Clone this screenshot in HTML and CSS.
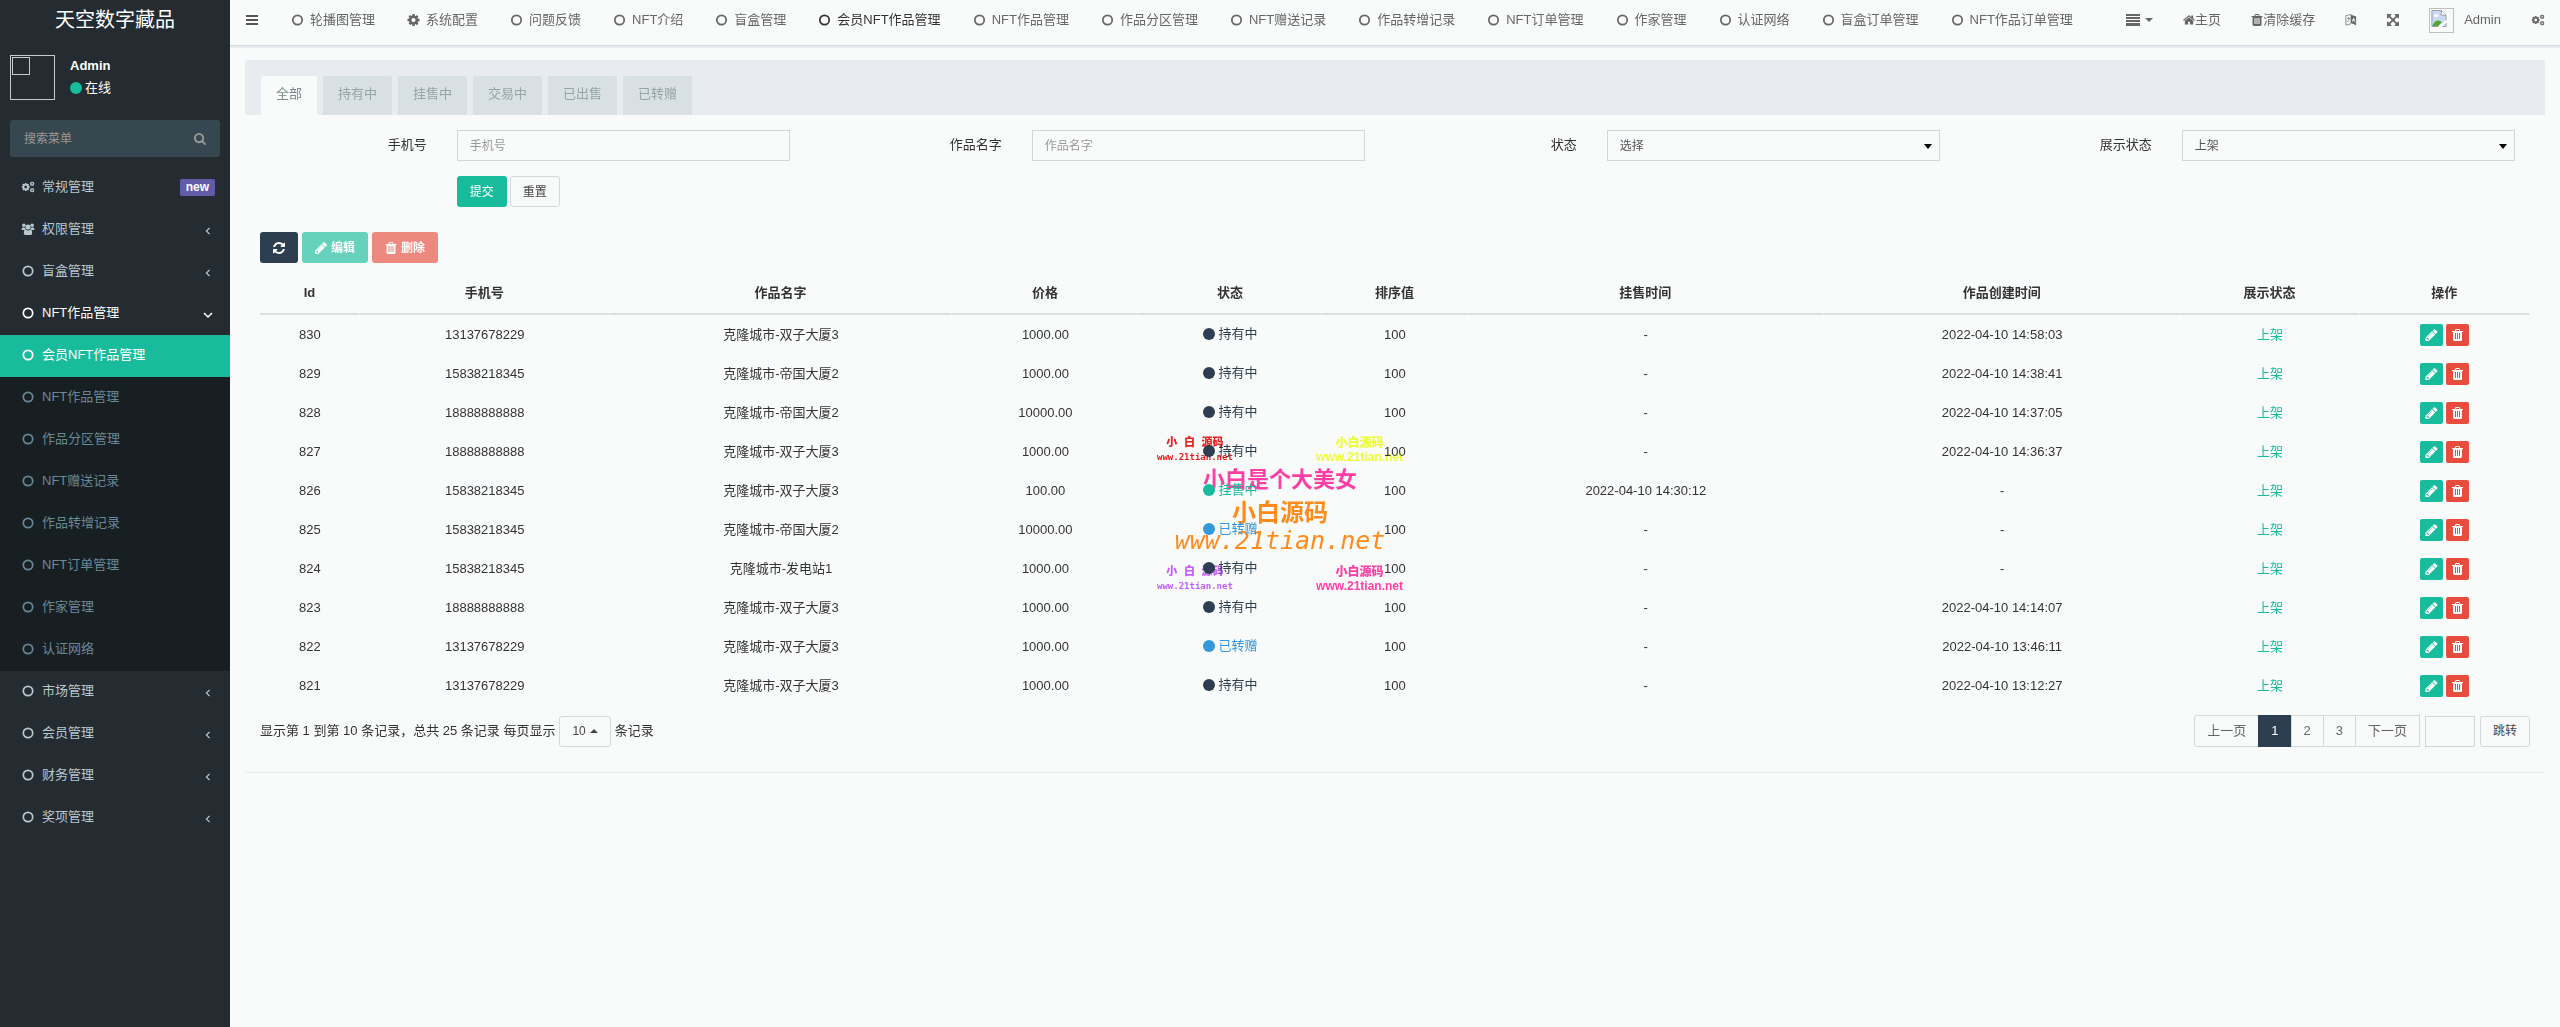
FILE: index.html
```html
<!DOCTYPE html>
<html lang="zh-CN">
<head>
  <meta charset="UTF-8">
  <meta name="viewport" content="width=device-width, initial-scale=1.0">
  <title>会员NFT作品管理</title>
  <link rel="stylesheet" href="styles.css">
</head>
<body>
  <!-- icon sprite -->
  <svg class="sprite" aria-hidden="true">
    <symbol id="i-circle" viewBox="0 0 12 12"><circle cx="6" cy="6" r="4.7" fill="none" stroke="currentColor" stroke-width="1.7"/></symbol>
    <symbol id="i-dot" viewBox="0 0 12 12"><circle cx="6" cy="6" r="6"/></symbol>
    <symbol id="i-cog" viewBox="128 128 1536 1536"><path d="M1152 896q0-106-75-181t-181-75-181 75-75 181 75 181 181 75 181-75 75-181zm512-109v222q0 12-8 23t-20 13l-185 28q-19 54-39 91 35 50 107 138 10 12 10 25t-9 23q-27 37-99 108t-94 71q-12 0-26-9l-138-108q-44 23-91 38-16 136-29 186-7 28-36 28h-222q-14 0-24.500-8.500t-11.500-21.500l-28-184q-49-16-90-37l-141 107q-10 9-25 9-14 0-25-11-126-114-165-168-7-10-7-23 0-12 8-23 15-21 51-66.500t54-70.500q-27-50-41-99l-183-27q-13-2-21-12.500t-8-23.500v-222q0-12 8-23t19-13l186-28q14-46 39-92-40-57-107-138-10-12-10-24 0-10 9-23 26-36 98.500-107.500t94.500-71.500q13 0 26 10l138 107q44-23 91-38 16-136 29-186 7-28 36-28h222q14 0 24.500 8.500t11.500 21.500l28 184q49 16 90 37l142-107q9-9 24-9 13 0 25 10 129 119 165 170 7 8 7 22 0 12-8 23-15 21-51 66.500t-54 70.500q26 50 41 98l183 28q13 2 21 12.500t8 23.500z"/></symbol>
    <symbol id="i-cogs" viewBox="0 0 28 26">
      <use href="#i-cog" x="0" y="4" width="18" height="18"/>
      <use href="#i-cog" x="18" y="1" width="10" height="10"/>
      <use href="#i-cog" x="18" y="15" width="10" height="10"/>
    </symbol>
    <symbol id="i-group" viewBox="0 0 28 26">
      <circle cx="5" cy="5" r="3.800"/><circle cx="23" cy="5" r="3.800"/><circle cx="14" cy="8.500" r="5.500"/>
      <path d="M0 15q0-6 3-6 4 2 5 1 0 4 2 5H2q-2 0-2 0zM28 15q0-6-3-6-4 2-5 1 0 4-2 5h8q2 0 2 0zM5 22q0-8 4-8 5 4 10 0 4 0 4 8 0 4-4 4H9q-4 0-4-4z"/>
    </symbol>
    <symbol id="i-home" viewBox="64 192 1664 1408"><path d="M1472 992v480q0 26-19 45t-45 19h-384v-384h-256v384h-384q-26 0-45-19t-19-45v-480q0-1 .5-3t.5-3l575-474 575 474q1 2 1 6zm223-69l-62 74q-8 9-21 11h-3q-13 0-21-7l-692-577-692 577q-12 8-24 7-13-2-21-11l-62-74q-8-10-7-23.500t11-21.500l719-599q32-26 76-26t76 26l244 204v-195q0-14 9-23t23-9h192q14 0 23 9t9 23v408l219 182q10 8 11 21.500t-7 23.500z"/></symbol>
    <symbol id="i-trash" viewBox="128 128 1536 1536"><path d="M704 1376v-704q0-14-9-23t-23-9h-64q-14 0-23 9t-9 23v704q0 14 9 23t23 9h64q14 0 23-9t9-23zm256 0v-704q0-14-9-23t-23-9h-64q-14 0-23 9t-9 23v704q0 14 9 23t23 9h64q14 0 23-9t9-23zm256 0v-704q0-14-9-23t-23-9h-64q-14 0-23 9t-9 23v704q0 14 9 23t23 9h64q14 0 23-9t9-23zm-544-992h448l-48-117q-7-9-17-11h-317q-10 2-17 11zm928 32v64q0 14-9 23t-23 9h-96v948q0 83-47 143.500t-113 60.500h-832q-66 0-113-58.500t-47-141.500v-952h-96q-14 0-23-9t-9-23v-64q0-14 9-23t23-9h309l70-167q15-37 54-63t79-26h320q40 0 79 26t54 63l70 167h309q14 0 23 9t9 23z"/></symbol>
    <symbol id="i-pencil" viewBox="128 128 1536 1536"><path d="M491 1536l91-91-235-235-91 91v107h128v128h107zm523-928q0-22-22-22-10 0-17 7l-542 542q-7 7-7 17 0 22 22 22 10 0 17-7l542-542q7-7 7-17zm-54-192l416 416-832 832h-416v-416zm683 96q0 53-37 90l-166 166-416-416 166-165q36-38 90-38 53 0 91 38l235 234q37 39 37 91z"/></symbol>
    <symbol id="i-refresh" viewBox="128 128 1536 1536"><path d="M1639 1056q0 5-1 7-64 268-268 434.500t-478 166.500q-146 0-282.500-55t-243.500-157l-129 129q-19 19-45 19t-45-19-19-45v-448q0-26 19-45t45-19h448q26 0 45 19t19 45-19 45l-137 137q71 66 161 102t187 36q134 0 250-65t186-179q11-17 53-117 8-23 30-23h192q13 0 22.500 9.500t9.500 22.500zm25-800v448q0 26-19 45t-45 19h-448q-26 0-45-19t-19-45 19-45l138-138q-148-137-349-137-134 0-250 65t-186 179q-11 17-53 117-8 23-30 23h-199q-13 0-22.500-9.500t-9.500-22.500v-7q65-268 270-434.500t480-166.500q146 0 284 55.500t245 156.500l130-129q19-19 45-19t45 19 19 45z"/></symbol>
    <symbol id="i-search" viewBox="64 128 1664 1664"><path d="M1216 832q0-185-131.500-316.500t-316.500-131.500-316.500 131.500-131.500 316.500 131.500 316.500 316.500 131.500 316.500-131.500 131.500-316.500zm512 832q0 52-38 90t-90 38q-54 0-90-38l-343-342q-179 124-399 124-143 0-273.500-55.500t-225-150-150-225-55.500-273.500 55.500-273.500 150-225 225-150 273.500-55.500 273.500 55.500 225 150 150 225 55.500 273.500q0 220-124 399l343 343q37 37 37 90z"/></symbol>
    <symbol id="i-expand" viewBox="128 128 1536 1536"><path d="M1411 541l-355 355 355 355 144-144q29-31 70-14 39 17 39 59v448q0 26-19 45t-45 19h-448q-42 0-59-40-17-39 14-69l144-144-355-355-355 355 144 144q31 30 14 69-17 40-59 40h-448q-26 0-45-19t-19-45v-448q0-42 40-59 39-17 69 14l144 144 355-355-355-355-144 144q-19 19-45 19-12 0-24-5-40-17-40-59v-448q0-26 19-45t45-19h448q42 0 59 40 17 39-14 69l-144 144 355 355 355-355-144-144q-31-30-14-69 17-40 59-40h448q26 0 45 19t19 45v448q0 42-39 59-13 5-25 5-26 0-45-19z"/></symbol>
    <symbol id="i-bars" viewBox="0 0 12 12"><path d="M0 1h12v2H0zM0 5h12v2H0zM0 9h12v2H0z"/></symbol>
    <symbol id="i-list" viewBox="0 0 14 12"><path d="M0 0h14v2H0zM0 3h14v2H0zM0 6h14v2H0zM0 9h14v3H0z"/></symbol>
    <symbol id="i-language" viewBox="0 0 14 14">
      <path d="M1 2l6-1.500v11L1 13z" fill="none" stroke="currentColor" stroke-width=".8"/>
      <path d="M2.500 5h3M4 3.500v2M2.500 9q2.500-1 2.500-4" fill="none" stroke="currentColor" stroke-width=".8"/>
      <path fill-rule="evenodd" d="M7 1l6 2v10l-6-2.500zM9 9l.5-1.500 1.500.5.500 1.700 1 .3L10.700 5l-1-.3L8 8.700z"/>
    </symbol>
    <symbol id="i-left" viewBox="0 0 6 10"><path d="M5 1L1 5l4 4" fill="none" stroke="currentColor" stroke-width="1.500"/></symbol>
    <symbol id="i-down" viewBox="0 0 10 6"><path d="M1 1l4 4 4-4" fill="none" stroke="currentColor" stroke-width="1.500"/></symbol>
    <symbol id="i-broken" viewBox="0 0 16 18">
      <path d="M.5.500h10l5 5v12H.5z" fill="#c9d8f5" stroke="#9a9a9a"/>
      <path d="M10.500.500v5h5" fill="#fff" stroke="#9a9a9a"/>
      <ellipse cx="5" cy="6" rx="2.500" ry="1.500" fill="#fff"/>
      <path d="M1 17q2-6 6-6 3 0 4 2l-4 4z" fill="#4fa82e"/>
      <path d="M7 18l9-8v3l-5 5z" fill="#fff"/>
    </symbol>
  </svg>

  <aside class="sidebar">
    <a href="#" class="logo">天空数字藏品</a>
    <div class="user-panel">
      <div class="avatar"></div>
      <div class="info">
        <strong>Admin</strong>
        <a href="#"><svg class="icon online"><use href="#i-dot"/></svg>在线</a>
      </div>
    </div>
    <form class="menu-search">
      <input type="text" placeholder="搜索菜单" aria-label="搜索菜单">
      <button type="button" aria-label="搜索"><svg class="icon"><use href="#i-search"/></svg></button>
    </form>
    <ul class="menu">
      <li><a href="#"><svg class="icon wide"><use href="#i-cogs"/></svg>常规管理<span class="badge">new</span></a></li>
      <li><a href="#"><svg class="icon wide"><use href="#i-group"/></svg>权限管理<svg class="angle"><use href="#i-left"/></svg></a></li>
      <li><a href="#"><svg class="icon wide"><use href="#i-circle"/></svg>盲盒管理<svg class="angle"><use href="#i-left"/></svg></a></li>
      <li class="open"><a href="#"><svg class="icon wide"><use href="#i-circle"/></svg>NFT作品管理<svg class="angle"><use href="#i-down"/></svg></a>
        <ul class="submenu">
          <li class="active"><a href="#"><svg class="icon wide"><use href="#i-circle"/></svg>会员NFT作品管理</a></li>
          <li><a href="#"><svg class="icon wide"><use href="#i-circle"/></svg>NFT作品管理</a></li>
          <li><a href="#"><svg class="icon wide"><use href="#i-circle"/></svg>作品分区管理</a></li>
          <li><a href="#"><svg class="icon wide"><use href="#i-circle"/></svg>NFT赠送记录</a></li>
          <li><a href="#"><svg class="icon wide"><use href="#i-circle"/></svg>作品转增记录</a></li>
          <li><a href="#"><svg class="icon wide"><use href="#i-circle"/></svg>NFT订单管理</a></li>
          <li><a href="#"><svg class="icon wide"><use href="#i-circle"/></svg>作家管理</a></li>
          <li><a href="#"><svg class="icon wide"><use href="#i-circle"/></svg>认证网络</a></li>
        </ul>
      </li>
      <li><a href="#"><svg class="icon wide"><use href="#i-circle"/></svg>市场管理<svg class="angle"><use href="#i-left"/></svg></a></li>
      <li><a href="#"><svg class="icon wide"><use href="#i-circle"/></svg>会员管理<svg class="angle"><use href="#i-left"/></svg></a></li>
      <li><a href="#"><svg class="icon wide"><use href="#i-circle"/></svg>财务管理<svg class="angle"><use href="#i-left"/></svg></a></li>
      <li><a href="#"><svg class="icon wide"><use href="#i-circle"/></svg>奖项管理<svg class="angle"><use href="#i-left"/></svg></a></li>
    </ul>
  </aside>

  <div class="wrapper">
    <header class="header">
      <button type="button" class="toggle" aria-label="菜单"><svg class="icon"><use href="#i-bars"/></svg></button>
      <nav class="nav-tabs">
        <a href="#"><svg class="icon"><use href="#i-circle"/></svg>轮播图管理</a>
        <a href="#"><svg class="icon"><use href="#i-cog"/></svg>系统配置</a>
        <a href="#"><svg class="icon"><use href="#i-circle"/></svg>问题反馈</a>
        <a href="#"><svg class="icon"><use href="#i-circle"/></svg>NFT介绍</a>
        <a href="#"><svg class="icon"><use href="#i-circle"/></svg>盲盒管理</a>
        <a href="#" class="active"><svg class="icon"><use href="#i-circle"/></svg>会员NFT作品管理</a>
        <a href="#"><svg class="icon"><use href="#i-circle"/></svg>NFT作品管理</a>
        <a href="#"><svg class="icon"><use href="#i-circle"/></svg>作品分区管理</a>
        <a href="#"><svg class="icon"><use href="#i-circle"/></svg>NFT赠送记录</a>
        <a href="#"><svg class="icon"><use href="#i-circle"/></svg>作品转增记录</a>
        <a href="#"><svg class="icon"><use href="#i-circle"/></svg>NFT订单管理</a>
        <a href="#"><svg class="icon"><use href="#i-circle"/></svg>作家管理</a>
        <a href="#"><svg class="icon"><use href="#i-circle"/></svg>认证网络</a>
        <a href="#"><svg class="icon"><use href="#i-circle"/></svg>盲盒订单管理</a>
        <a href="#"><svg class="icon"><use href="#i-circle"/></svg>NFT作品订单管理</a>
      </nav>
      <nav class="nav-right">
        <a href="#" aria-label="更多"><svg class="icon list"><use href="#i-list"/></svg><span class="caret"></span></a>
        <a href="#"><svg class="icon"><use href="#i-home"/></svg>主页</a>
        <a href="#"><svg class="icon"><use href="#i-trash"/></svg>清除缓存</a>
        <a href="#" aria-label="语言"><svg class="icon"><use href="#i-language"/></svg></a>
        <a href="#" aria-label="全屏"><svg class="icon"><use href="#i-expand"/></svg></a>
        <a href="#" class="account"><span class="thumb"><svg><use href="#i-broken"/></svg></span>Admin</a>
        <a href="#" aria-label="设置"><svg class="icon cogs"><use href="#i-cogs"/></svg></a>
      </nav>
    </header>

    <main class="content">
      <section class="panel">
        <div class="panel-heading">
          <a href="#" class="active">全部</a>
          <a href="#">持有中</a>
          <a href="#">挂售中</a>
          <a href="#">交易中</a>
          <a href="#">已出售</a>
          <a href="#">已转赠</a>
        </div>

        <form class="search-form">
          <div class="field">
            <label for="mobile">手机号</label>
            <div class="control"><input type="text" id="mobile" placeholder="手机号"></div>
          </div>
          <div class="field">
            <label for="name">作品名字</label>
            <div class="control"><input type="text" id="name" placeholder="作品名字"></div>
          </div>
          <div class="field">
            <label for="status">状态</label>
            <div class="control select"><select id="status"><option>选择</option><option>持有中</option><option>挂售中</option></select></div>
          </div>
          <div class="field">
            <label for="show">展示状态</label>
            <div class="control select"><select id="show"><option>上架</option><option>下架</option></select></div>
          </div>
          <div class="field">
            <div class="control actions">
              <button type="button" class="btn btn-success">提交</button>
              <button type="reset" class="btn btn-default">重置</button>
            </div>
          </div>
        </form>

        <div class="table-box">
          <div class="toolbar">
            <button type="button" class="btn btn-primary" aria-label="刷新"><svg class="icon"><use href="#i-refresh"/></svg></button>
            <button type="button" class="btn btn-success" disabled><svg class="icon"><use href="#i-pencil"/></svg>编辑</button>
            <button type="button" class="btn btn-danger" disabled><svg class="icon"><use href="#i-trash"/></svg>删除</button>
          </div>

          <table class="table">
            <colgroup>
              <col class="c-id"><col class="c-mobile"><col class="c-name"><col class="c-price"><col class="c-status">
              <col class="c-sort"><col class="c-time"><col class="c-time"><col class="c-show"><col class="c-ops">
            </colgroup>
            <thead>
              <tr><th>Id</th><th>手机号</th><th>作品名字</th><th>价格</th><th>状态</th><th>排序值</th><th>挂售时间</th><th>作品创建时间</th><th>展示状态</th><th>操作</th></tr>
            </thead>
            <tbody>
              <tr>
                <td>830</td><td>13137678229</td><td>克隆城市-双子大厦3</td><td>1000.00</td>
                <td><span class="status"><svg class="icon"><use href="#i-dot"/></svg>持有中</span></td>
                <td>100</td><td>-</td><td>2022-04-10 14:58:03</td><td><a href="#">上架</a></td>
                <td><button type="button" class="btn-xs edit" aria-label="编辑"><svg class="icon"><use href="#i-pencil"/></svg></button><button type="button" class="btn-xs del" aria-label="删除"><svg class="icon"><use href="#i-trash"/></svg></button></td>
              </tr>
              <tr>
                <td>829</td><td>15838218345</td><td>克隆城市-帝国大厦2</td><td>1000.00</td>
                <td><span class="status"><svg class="icon"><use href="#i-dot"/></svg>持有中</span></td>
                <td>100</td><td>-</td><td>2022-04-10 14:38:41</td><td><a href="#">上架</a></td>
                <td><button type="button" class="btn-xs edit" aria-label="编辑"><svg class="icon"><use href="#i-pencil"/></svg></button><button type="button" class="btn-xs del" aria-label="删除"><svg class="icon"><use href="#i-trash"/></svg></button></td>
              </tr>
              <tr>
                <td>828</td><td>18888888888</td><td>克隆城市-帝国大厦2</td><td>10000.00</td>
                <td><span class="status"><svg class="icon"><use href="#i-dot"/></svg>持有中</span></td>
                <td>100</td><td>-</td><td>2022-04-10 14:37:05</td><td><a href="#">上架</a></td>
                <td><button type="button" class="btn-xs edit" aria-label="编辑"><svg class="icon"><use href="#i-pencil"/></svg></button><button type="button" class="btn-xs del" aria-label="删除"><svg class="icon"><use href="#i-trash"/></svg></button></td>
              </tr>
              <tr>
                <td>827</td><td>18888888888</td><td>克隆城市-双子大厦3</td><td>1000.00</td>
                <td><span class="status"><svg class="icon"><use href="#i-dot"/></svg>持有中</span></td>
                <td>100</td><td>-</td><td>2022-04-10 14:36:37</td><td><a href="#">上架</a></td>
                <td><button type="button" class="btn-xs edit" aria-label="编辑"><svg class="icon"><use href="#i-pencil"/></svg></button><button type="button" class="btn-xs del" aria-label="删除"><svg class="icon"><use href="#i-trash"/></svg></button></td>
              </tr>
              <tr>
                <td>826</td><td>15838218345</td><td>克隆城市-双子大厦3</td><td>100.00</td>
                <td><span class="status selling"><svg class="icon"><use href="#i-dot"/></svg>挂售中</span></td>
                <td>100</td><td>2022-04-10 14:30:12</td><td>-</td><td><a href="#">上架</a></td>
                <td><button type="button" class="btn-xs edit" aria-label="编辑"><svg class="icon"><use href="#i-pencil"/></svg></button><button type="button" class="btn-xs del" aria-label="删除"><svg class="icon"><use href="#i-trash"/></svg></button></td>
              </tr>
              <tr>
                <td>825</td><td>15838218345</td><td>克隆城市-帝国大厦2</td><td>10000.00</td>
                <td><span class="status given"><svg class="icon"><use href="#i-dot"/></svg>已转赠</span></td>
                <td>100</td><td>-</td><td>-</td><td><a href="#">上架</a></td>
                <td><button type="button" class="btn-xs edit" aria-label="编辑"><svg class="icon"><use href="#i-pencil"/></svg></button><button type="button" class="btn-xs del" aria-label="删除"><svg class="icon"><use href="#i-trash"/></svg></button></td>
              </tr>
              <tr>
                <td>824</td><td>15838218345</td><td>克隆城市-发电站1</td><td>1000.00</td>
                <td><span class="status"><svg class="icon"><use href="#i-dot"/></svg>持有中</span></td>
                <td>100</td><td>-</td><td>-</td><td><a href="#">上架</a></td>
                <td><button type="button" class="btn-xs edit" aria-label="编辑"><svg class="icon"><use href="#i-pencil"/></svg></button><button type="button" class="btn-xs del" aria-label="删除"><svg class="icon"><use href="#i-trash"/></svg></button></td>
              </tr>
              <tr>
                <td>823</td><td>18888888888</td><td>克隆城市-双子大厦3</td><td>1000.00</td>
                <td><span class="status"><svg class="icon"><use href="#i-dot"/></svg>持有中</span></td>
                <td>100</td><td>-</td><td>2022-04-10 14:14:07</td><td><a href="#">上架</a></td>
                <td><button type="button" class="btn-xs edit" aria-label="编辑"><svg class="icon"><use href="#i-pencil"/></svg></button><button type="button" class="btn-xs del" aria-label="删除"><svg class="icon"><use href="#i-trash"/></svg></button></td>
              </tr>
              <tr>
                <td>822</td><td>13137678229</td><td>克隆城市-双子大厦3</td><td>1000.00</td>
                <td><span class="status given"><svg class="icon"><use href="#i-dot"/></svg>已转赠</span></td>
                <td>100</td><td>-</td><td>2022-04-10 13:46:11</td><td><a href="#">上架</a></td>
                <td><button type="button" class="btn-xs edit" aria-label="编辑"><svg class="icon"><use href="#i-pencil"/></svg></button><button type="button" class="btn-xs del" aria-label="删除"><svg class="icon"><use href="#i-trash"/></svg></button></td>
              </tr>
              <tr>
                <td>821</td><td>13137678229</td><td>克隆城市-双子大厦3</td><td>1000.00</td>
                <td><span class="status"><svg class="icon"><use href="#i-dot"/></svg>持有中</span></td>
                <td>100</td><td>-</td><td>2022-04-10 13:12:27</td><td><a href="#">上架</a></td>
                <td><button type="button" class="btn-xs edit" aria-label="编辑"><svg class="icon"><use href="#i-pencil"/></svg></button><button type="button" class="btn-xs del" aria-label="删除"><svg class="icon"><use href="#i-trash"/></svg></button></td>
              </tr>
            </tbody>
          </table>

          <div class="table-footer">
            <div class="page-info">
              <span>显示第 1 到第 10 条记录，总共 25 条记录 每页显示</span>
              <button type="button" class="btn btn-default page-size">10<span class="caret up"></span></button>
              <span>条记录</span>
            </div>
            <div class="pager">
              <ul class="pagination">
                <li><a href="#">上一页</a></li>
                <li class="active"><a href="#">1</a></li>
                <li><a href="#">2</a></li>
                <li><a href="#">3</a></li>
                <li><a href="#">下一页</a></li>
              </ul>
              <input type="text" class="jump" aria-label="页码">
              <button type="button" class="btn btn-default">跳转</button>
            </div>
          </div>
        </div>
      </section>
    </main>
  </div>

  <div class="watermark" aria-hidden="true">
    <div class="mark-row">
      <div class="mark-small red"><b>小 白 源码</b><span>www.21tian.net</span></div>
      <div class="mark-round yellow"><b>小白源码</b><span>www.21tian.net</span></div>
    </div>
    <div class="mark-title">小白是个大美女</div>
    <div class="mark-main"><b>小白源码</b><span>www.21tian.net</span></div>
    <div class="mark-row">
      <div class="mark-small purple"><b>小 白 源码</b><span>www.21tian.net</span></div>
      <div class="mark-round pink"><b>小白源码</b><span>www.21tian.net</span></div>
    </div>
  </div>
</body>
</html>
```

FILE: styles.css
```css
* {
  box-sizing: border-box;
}

body {
  margin: 0;
  min-height: 100vh;
  display: grid;
  grid-template-columns: 230px minmax(0, 1fr);
  background: #f9fbfa;
  color: #333;
  font-family: "Liberation Sans", "Noto Sans CJK SC", sans-serif;
  font-size: 13px;
  line-height: 20px;
}

a {
  color: #18bc9c;
  text-decoration: none;
}

ul {
  list-style: none;
  margin: 0;
  padding: 0;
}

button, input, select {
  font: inherit;
}

.sprite {
  position: absolute;
  width: 0;
  height: 0;
}

.icon {
  width: 12px;
  height: 12px;
  flex: none;
  fill: currentColor;
}

/* sidebar */
.sidebar {
  background: #242c32;
}

.logo {
  display: block;
  height: 45px;
  line-height: 40px;
  text-align: center;
  font-size: 20px;
  color: #fff;
}

.user-panel {
  display: flex;
  gap: 15px;
  padding: 10px;
  color: #fff;
}

.avatar {
  width: 45px;
  height: 45px;
  border: 1px solid #c8cacb;
  padding: 1px;
}

.avatar::before {
  content: "";
  display: block;
  width: 16px;
  height: 16px;
  border: 1px solid #c8cacb;
}

.info strong {
  display: block;
  line-height: 22px;
}

.info a {
  display: flex;
  align-items: center;
  gap: 3px;
  color: #fff;
  line-height: 22px;
}

.online {
  color: #18bc9c;
}

.menu-search {
  display: flex;
  align-items: center;
  height: 37px;
  margin: 10px;
  padding: 0 14px;
  border-radius: 3px;
  background: #37474f;
}

.menu-search input {
  flex: 1;
  min-width: 0;
  padding: 0;
  border: 0;
  outline: 0;
  background: none;
  color: #fff;
  font-size: 12px;
}

.menu-search input::placeholder {
  color: #999;
}

.menu-search button {
  display: flex;
  padding: 0;
  border: 0;
  background: none;
  color: #999;
}

.menu a {
  display: flex;
  align-items: center;
  height: 42px;
  padding: 0 15px 2px 20px;
  color: #b8c7ce;
}

.wide {
  width: 16px;
  margin-right: 6px;
}

.badge {
  margin-left: auto;
  padding: 0 6px;
  border-radius: 2px;
  background: #605ca8;
  color: #fff;
  font-size: 12px;
  font-weight: bold;
  line-height: 17px;
}

.angle {
  width: 10px;
  height: 8px;
  margin: 4px 2px 0 auto;
}

.menu .open > a {
  color: #fff;
}

.submenu {
  background: #181f23;
}

.submenu a {
  color: #6a8795;
}

.submenu .active a {
  background: #18bc9c;
  color: #fff;
}

/* header */
.wrapper {
  position: relative;
  z-index: 1;
}

.header {
  display: flex;
  height: 46px;
  border-bottom: 1px solid #d8dde1;
  box-shadow: 0 2px 0 #e8ebef;
  line-height: 40px;
}

.header a {
  display: flex;
  align-items: center;
  height: 40px;
  padding: 0 15px;
  color: #666;
  white-space: nowrap;
}

.header .active {
  color: #333;
}

.toggle {
  width: 44px;
  height: 40px;
  padding: 0 16px;
  border: 0;
  background: none;
  color: #555;
}

.toggle .icon {
  display: block;
}

.nav-tabs {
  display: flex;
}

.nav-tabs .icon {
  width: 17px;
  margin-right: 4px;
}

.nav-right {
  display: flex;
  margin-left: auto;
}

.nav-right .icon {
  margin-right: 4px;
}

.nav-right .icon.list {
  width: 14px;
  margin-right: 5px;
}

.nav-right .icon:last-child {
  margin-right: 0;
}

.nav-right .icon.cogs {
  width: 14px;
}

.account {
  gap: 10px;
}

.thumb {
  width: 25px;
  height: 25px;
  padding: 1px;
  border: 1px solid #c0c0c0;
}

.thumb svg {
  display: block;
  width: 16px;
  height: 17px;
}

.caret {
  border: 4px solid transparent;
  border-top-color: currentColor;
  border-bottom: 0;
}

.caret.up {
  border-top: 0;
  border-bottom: 4px solid currentColor;
}

/* content */
.content {
  padding: 14px 15px;
}

.panel {
  border-bottom: 1px solid #e8ebec;
}

.panel-heading {
  display: flex;
  gap: 6px;
  padding: 16px 16px 0;
  border-radius: 3px 3px 0 0;
  background: #e8ebef;
}

.panel-heading a {
  padding: 8px 15px 11px;
  border-radius: 3px 3px 0 0;
  background: #d8dfe5;
  color: #95a5a6;
}

.panel-heading .active {
  background: #f9fbfa;
  color: #7b8a8b;
}

.search-form {
  display: grid;
  grid-template-columns: repeat(4, 1fr);
  row-gap: 15px;
  padding-top: 15px;
}

.field {
  display: grid;
  grid-template-columns: 1fr 2fr;
  padding: 0 15px;
}

.field label {
  padding: 5px 15px 0 0;
  text-align: right;
}

.control {
  position: relative;
  grid-column: 2;
  padding: 0 15px;
}

.control input, .control select, .jump {
  width: 100%;
  height: 31px;
  padding: 0 12px;
  border: 1px solid #d2d6de;
  border-radius: 0;
  background: none;
  color: #555;
  font-size: 12px;
  appearance: none;
}

.control input::placeholder {
  color: #999;
}

.select::after {
  content: "";
  position: absolute;
  top: 14px;
  right: 23px;
  border: 4px solid transparent;
  border-top: 5px solid #000;
  border-bottom: 0;
  pointer-events: none;
}

.actions {
  display: flex;
  gap: 3px;
}

.btn {
  display: inline-flex;
  align-items: center;
  justify-content: center;
  gap: 4px;
  height: 31px;
  padding: 0 12px;
  border: 1px solid transparent;
  border-radius: 3px;
  color: #fff;
  font-size: 12px;
  white-space: nowrap;
}

.btn:disabled {
  opacity: .65;
  font-weight: bold;
}

.btn-success { background: #18bc9c; }
.btn-primary { background: #2c3e50; }
.btn-danger { background: #e74c3c; }

.btn-default {
  border-color: #d5d8dc;
  background: #f9fbfa;
  color: #444;
}

/* table */
.table-box {
  padding: 25px 15px;
}

.toolbar {
  display: flex;
  gap: 4px;
  margin-bottom: 10px;
}

.table {
  width: 100%;
  table-layout: fixed;
  border-collapse: separate;
  border-spacing: 0;
}

.table th, .table td {
  height: 39px;
  padding: 0 8px;
  text-align: center;
}

.table th {
  height: 42px;
  border-bottom: 2px solid #dcdfe2;
  border-right: 1px solid #f9fbfa;
}

.c-id { width: 4.4%; }
.c-mobile { width: 11%; }
.c-name { width: 15.1%; }
.c-price { width: 8.2%; }
.c-status { width: 8.1%; }
.c-sort { width: 6.4%; }
.c-time { width: 15.7%; }
.c-show { width: 7.9%; }
.c-ops { width: 7.5%; }

.status {
  display: inline-flex;
  align-items: center;
  gap: 3px;
  color: #2c3e50;
}

.selling { color: #18bc9c; }
.given { color: #3498db; }

.btn-xs {
  width: 23px;
  height: 22px;
  padding: 5px;
  border: 0;
  border-radius: 2px;
  color: #fff;
  vertical-align: middle;
}

.btn-xs .icon {
  display: block;
  width: 100%;
}

.edit {
  margin-right: 3px;
  background: #18bc9c;
}

.del {
  background: #e74c3c;
}

.table-footer {
  display: flex;
  justify-content: space-between;
  align-items: center;
  padding-top: 10px;
}

.page-info {
  display: flex;
  align-items: center;
  gap: 4px;
}

.pager {
  display: flex;
  align-items: center;
  gap: 5px;
}

.pagination {
  display: flex;
}

.pagination a {
  display: block;
  height: 32px;
  margin-left: -1px;
  padding: 5px 12px;
  border: 1px solid #d5d8dc;
  color: #666;
}

.pagination li:first-child a {
  border-radius: 3px 0 0 3px;
}

.pagination .active a {
  border-color: #2c3e50;
  background: #2c3e50;
  color: #fff;
}

.jump {
  width: 50px;
}

/* watermark behind the page text */
.watermark {
  position: fixed;
  top: 50%;
  left: 50%;
  z-index: 0;
  display: flex;
  flex-direction: column;
  align-items: center;
  width: 246px;
  transform: translate(-50%, -50%);
}

.mark-row {
  display: flex;
  justify-content: space-between;
  width: 100%;
  text-align: center;
}

.mark-row b, .mark-row span, .mark-main b, .mark-main span {
  display: block;
}

.mark-small {
  font: bold 9px/14px "DejaVu Sans Mono", "Noto Sans CJK SC", monospace;
}

.mark-small b {
  font-size: 11px;
}

.mark-round {
  font: bold 12px/14px "Liberation Sans", "Noto Sans CJK SC", sans-serif;
}

.red { color: #e8201c; }
.yellow { color: #eeff30; }
.purple { color: #c45cff; }
.pink { color: #ff3ea5; }

.mark-title {
  padding-top: 2px;
  color: #ff3ea5;
  font-size: 22px;
  font-weight: bold;
  line-height: 28px;
}

.mark-main {
  padding: 5px 0 10px;
  color: #ff8c1a;
  text-align: center;
  font: italic 25px/28px "DejaVu Sans Mono", "Noto Sans CJK SC", monospace;
}

.mark-main b {
  font-style: normal;
  font-size: 24px;
}
```
